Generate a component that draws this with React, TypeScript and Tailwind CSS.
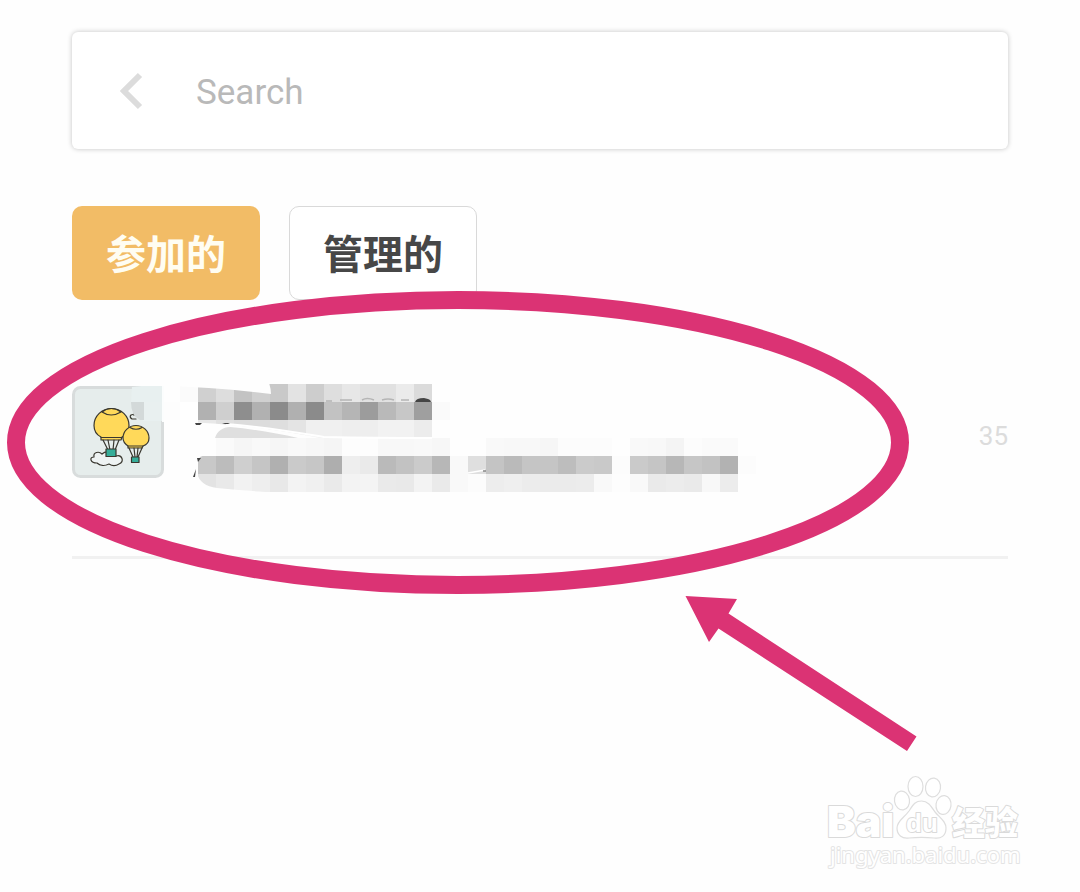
import React from "react";

const CELL = 18;

type MosaicRow = { y: number; runs: { x: number; shades: string }[] };

// Each shade is a two-digit hex grey level, one per cell.
const MOSAIC: MosaicRow[] = [
  { y: 18, runs: [{ x: 16, shades: "fb d0 dd c3 d0 c9 e3 cd de e7 e1 e1 eb db" }] },
  { y: 36, runs: [{ x: -2, shades: "fd ff b1 cf 8e b1 8b b0 8b c2 b5 9c b9 c7 9f fa" }] },
  { y: 54, runs: [{ x: 34, shades: "e8 e0 dc dc de e4 f0 f0 ee ee f2 f2 ec" }] },
  { y: 72, runs: [{ x: 52, shades: "fa f6 f9 f6 f9 f7 f5 fd fd f8 f8 f9 f7" }, { x: 322, shades: "f9 f8 f8 f6 fc fc fc" }, { x: 466, shades: "f9 f8 f4 fc fa fa" }] },
  { y: 90, runs: [{ x: 34, shades: "c8 bc cf c5 b0 ca c6 ae ee ea ba c2 cb b7 f9 df c4 ba c5 c5 bd cb c9 fc ca c5 b7 c6 c2 b2 fc" }] },
  { y: 108, runs: [{ x: 34, shades: "e3 e9 f2 ee e8 f3 f0 ea f3 f4 ea e9 f3 ea f9 fc ed ef ec eb eb ec f9 fd f9 ea ec ea f8 ec" }] },
];

function Mosaic() {
  return (
    <svg width="600" height="132" viewBox="0 0 600 132" className="block shrink-0" shapeRendering="crispEdges" aria-hidden="true">
      {MOSAIC.map((row) =>
        row.runs.map((run) =>
          run.shades.split(" ").map((s, i) => (
            <rect key={`${row.y}-${run.x}-${i}`} x={run.x + i * CELL} y={row.y} width={CELL} height={CELL} fill={`#${s}${s}${s}`} />
          )),
        ),
      )}
      <g shapeRendering="geometricPrecision">
        <path d="M0 18V20Q50 21 107 28Q107 23 105 17H0Z" fill="#fefefe" />
        <path d="M0 56Q70 55 156 72H40L34 90H0Z" fill="#fefefe" />
        <path d="M51 72C53 65 59 61 66 61C88 63 112 67 134 72Z" fill="#dfdfdf" />
        <path d="M62 58C102 61 142 68 160 71Q210 72 268 72" fill="none" stroke="#fff" strokeWidth="2" />
        <path d="M33 89H41L36 91L33 98Z" fill="#fefefe" />
        <path d="M33 107Q36 120 53 122Q80 125 114 126.500H33Z" fill="#fefefe" />
        <path d="M251 36Q252 32 260 32Q267 33 267 36Z" fill="#444" />
        <path d="M162 35h6m8 -1h12m10 0q5-3 12 0m8 0q6-2 12 0m7 0h8" fill="none" stroke="#b5b5b5" strokeWidth="1.500" />
        <path d="M31 57h7l-2 2h-4z M58 57h8l-2 1h-3z M33 92h4l-3 4z M32 103l-1 8h-2z" fill="#444" />
        <path d="M304 107l17-3" stroke="#fff" strokeWidth="1.500" />
        <path d="M319 105h3" stroke="#888" strokeWidth="1.500" />
      </g>
    </svg>
  );
}

function Balloons() {
  return (
    <svg width="92" height="92" viewBox="0 0 92 92" className="block shrink-0" role="img" aria-label="热气球">
      <rect x="1.500" y="1.500" width="89" height="89" rx="7" fill="#e6edec" stroke="#d8dcdc" strokeWidth="3" />
      <g stroke="#39372f" strokeWidth="1.200" strokeLinejoin="round" strokeLinecap="round">
        <path d="M25 77C18 77 17 71 22 71C21 66 27 65 30 68C34 64 41 66 44 70C50 68 53 76 47 78C44 80 40 80 37 78C33 80 28 80 25 77Z" fill="#eef3f3" />
        <path d="M64 33H60q-3-2-1-4q2-1 3 0q0-3 3-3" fill="none" />
        <path d="M29 51C25 49 22 45 22 39.500C22 30 30 22.500 39.500 22.500C49 22.500 57 30 57 39.500C57 45 54 49 50 51L49 54H29Z" fill="#ffd95a" />
        <path d="M30 26Q39 32 49 26M30 26Q39 19 49 26M29 51.500H50" fill="none" />
        <path d="M31 54L36 64M36 54L38 64M42 54L41 64M47 54L43 64" fill="none" />
        <path d="M34 63H44V70.500H34Z" fill="#35ad99" />
        <path d="M56 60C53 58 51 56 51 52C51 45 57 39.500 64 39.500C71 39.500 77 45 77 52C77 56 74 59 71 60L70 62H56Z" fill="#ffd95a" />
        <path d="M58 41.500Q64 45 70 41.500M56 60H71" fill="none" />
        <path d="M57 62L61 71M62 62L63 71M66 62L65 71M70 62L66 71" fill="none" />
        <path d="M59.500 71H67V76.500H59.500Z" fill="#35ad99" />
      </g>
      <path d="M60 1Q74 -1 90 0H92V35H71V16H59Z" fill="#e8f0f0" />
      <path d="M59 16H72V34H68Q59 30 59 16Z" fill="#d3d9d9" />
      <path d="M72 16H90V34H72Z" fill="#e9f0f0" />
      <path d="M90 0h2v36h-2z" fill="#fbfdfd" />
    </svg>
  );
}

function Watermark() {
  return (
    <svg width="210" height="100" viewBox="0 0 210 100" className="absolute right-12 top-[772px]" role="img" aria-label="Baidu 经验">
      <g fill="#fff" stroke="#dedede" strokeWidth="1.200">
        <ellipse cx="80" cy="28.500" rx="7.500" ry="9.500" transform="rotate(-8 80 28.500)" />
        <ellipse cx="93.500" cy="14.500" rx="7.500" ry="10" />
        <ellipse cx="111" cy="15.500" rx="7.500" ry="9.500" transform="rotate(8 111 15.500)" />
        <ellipse cx="121.500" cy="33" rx="7.500" ry="9.500" transform="rotate(8 121.500 33)" />
        <path d="M99.500 29C106 29 109 34 113 40C118 46 124 49 124 56C124 64 119 67 112 66C103 65 96 65 87 66C80 67 75 63 75 56C75 49 82 46 87 39C91 33 93 29 99.500 29Z" />
      </g>
      <g fill="#fff" stroke="#dadada" strokeWidth="2" strokeLinejoin="round" className="[paint-order:stroke]">
        <text x="5" y="65" className="font-['Inter',sans-serif] text-[43px] font-black">Bai</text>
        <text x="84" y="60" className="font-['Liberation_Sans',sans-serif] text-[26px] font-bold">du</text>
        <text x="130" y="63" className="font-['Noto_Sans_CJK_SC',sans-serif] text-[33px] font-black">经验</text>
        <text x="8" y="91" stroke="#e4e4e4" className="font-['Noto_Sans',sans-serif] text-[22px]">jingyan.baidu.com</text>
      </g>
    </svg>
  );
}

function Annotation() {
  return (
    <svg width="930" height="770" viewBox="0 0 930 770" className="pointer-events-none absolute left-0 top-0" aria-hidden="true">
      <ellipse cx="458" cy="442.500" rx="442" ry="142.500" fill="none" stroke="#db3374" strokeWidth="18" />
      <path d="M685.500 596L737 599L728.500 613.500L916.500 736.500L907 751L718.500 628.500L709 642Z" fill="#db3374" />
    </svg>
  );
}

export default function App() {
  return (
    <div className="relative min-h-screen bg-[#fefefe] px-[72px] pt-8 font-['Roboto','Noto_Sans_CJK_SC',sans-serif]">
      <form className="flex h-[117px] items-center rounded-md bg-white pl-12 shadow-[0_0_5px_rgba(0,0,0,0.24)]" onSubmit={(e) => e.preventDefault()}>
        <button type="button" aria-label="返回" className="w-[76px] shrink-0">
          <svg width="24" height="38" viewBox="0 0 24 38" fill="none" stroke="#dcdcdc" strokeWidth="6" aria-hidden="true">
            <path d="M20 3L4 19L20 35" />
          </svg>
        </button>
        <input
          type="text"
          aria-label="Search"
          placeholder="Search"
          className="min-w-0 flex-1 bg-transparent pt-1.5 text-[35px] text-[#444] outline-none placeholder:text-[#b9b9b9]"
        />
      </form>

      <div className="mt-[57px] flex gap-[29px]">
        <button type="button" className="h-[94px] rounded-[10px] bg-[#f2bc66] px-[34px] pt-1.5 text-[40px] font-bold text-[#fffdf2]">
          参加的
        </button>
        <button type="button" className="h-[94px] rounded-[10px] border border-[#d9d9d9] bg-white px-[33px] pt-1.5 text-[40px] font-bold text-[#474747]">
          管理的
        </button>
      </div>

      <ul>
        <li className="flex h-[259px] items-start border-b-3 border-[#f1f1f1] pt-[66px]">
          <div className="mt-5">
            <Balloons />
          </div>
          <Mosaic />
          <span className="ml-auto pt-[51px] text-[26px] text-[#dcdcdc]">35</span>
        </li>
      </ul>

      <Annotation />
      <Watermark />
    </div>
  );
}
